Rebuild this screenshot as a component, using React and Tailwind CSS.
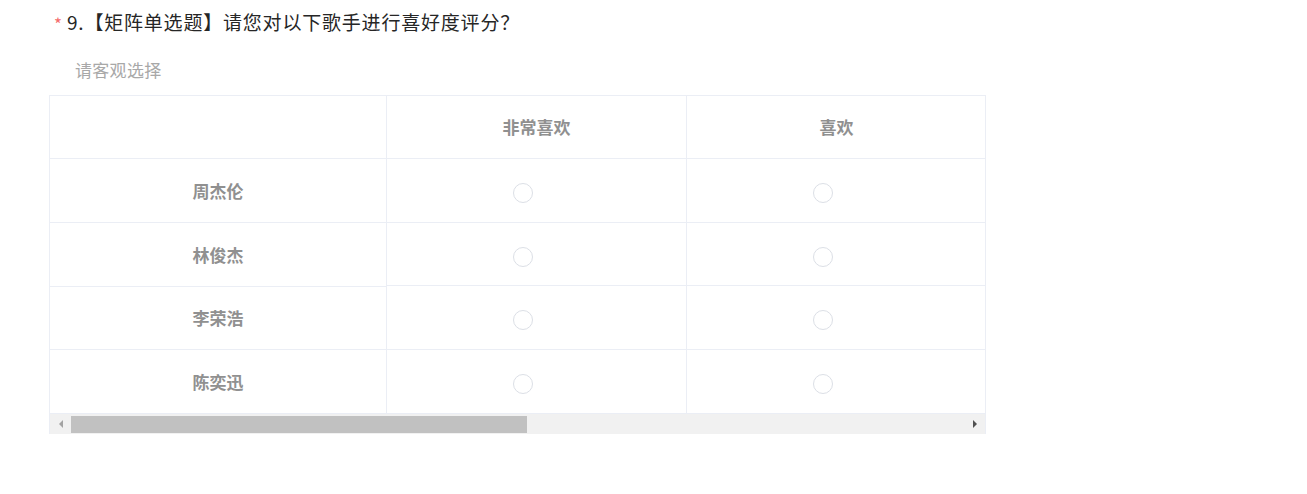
import React from 'react'

const singers = ['周杰伦', '林俊杰', '李荣浩', '陈奕迅']
const options = ['非常喜欢', '喜欢']

// left (fixed) column rows are a pixel off from the body rows, as in the original
const leftHeights = ['h-[64px]', 'h-[64px]', 'h-[63px]', 'h-[63px]']
const bodyHeights = ['h-[64px]', 'h-[63px]', 'h-[64px]', 'h-[63px]']

const Radio = () => (
  <span className="block w-[20px] h-[20px] rounded-full border border-[#dcdfe6] bg-white mr-[28px] mt-[5px]" />
)

export default function App() {
  return (
    <div
      className="bg-white min-h-[494px] pt-[10px] pl-[49px]"
      style={{ fontFamily: '"Microsoft YaHei", "Noto Sans CJK SC", "Liberation Sans", sans-serif' }}
    >
      {/* question title */}
      <div className="flex items-center h-[24px] pl-[5px] text-[19px] tracking-[0.8px] text-[#262626]">
        <span className="text-[#f56c6c] text-[17px] mr-[5px] mt-[3px] tracking-normal">*</span>
        <span>9.【矩阵单选题】请您对以下歌手进行喜好度评分？</span>
      </div>

      <div className="pl-[26px] mt-[23px] h-[26px] flex items-center text-[17px] tracking-[0.3px] text-[#a8a8a8]">
        请客观选择
      </div>

      {/* matrix table */}
      <div className="mt-[12px] w-[937px] border border-[#ebeef5] border-b-0">
        <div className="flex overflow-hidden">
          {/* fixed column */}
          <div className="w-[337px] shrink-0 border-r border-[#ebeef5]">
            <div className="h-[63px] border-b border-[#ebeef5]" />
            {singers.map((s, i) => (
              <div
                key={s}
                className={`${leftHeights[i]} flex items-center justify-center text-[17px] font-bold text-[#909090] ${i < 3 ? 'border-b border-[#ebeef5]' : ''}`}
              >
                {s}
              </div>
            ))}
          </div>

          {options.map((o) => (
            <div key={o} className="w-[300px] shrink-0 border-r border-[#ebeef5]">
              <div className="h-[63px] border-b border-[#ebeef5] flex items-center justify-center text-[17px] font-bold text-[#909090]">
                {o}
              </div>
              {singers.map((s, i) => (
                <div
                  key={s}
                  className={`${bodyHeights[i]} flex items-center justify-center ${i < 3 ? 'border-b border-[#ebeef5]' : ''}`}
                >
                  <Radio />
                </div>
              ))}
            </div>
          ))}
        </div>

        {/* horizontal scrollbar */}
        <div className="h-[21px] bg-[#f1f1f1] border-t border-[#ebeef5] flex items-center">
          <div className="w-[21px] h-full flex items-center justify-center">
            <span className="w-0 h-0 border-y-[4px] border-y-transparent border-r-[4px] border-r-[#a3a3a3]" />
          </div>
          <div className="flex-1 h-[17px]">
            <div className="w-[456px] h-full bg-[#c1c1c1]" />
          </div>
          <div className="w-[21px] h-full flex items-center justify-center">
            <span className="w-0 h-0 border-y-[4px] border-y-transparent border-l-[4px] border-l-[#505050]" />
          </div>
        </div>
      </div>
    </div>
  )
}
